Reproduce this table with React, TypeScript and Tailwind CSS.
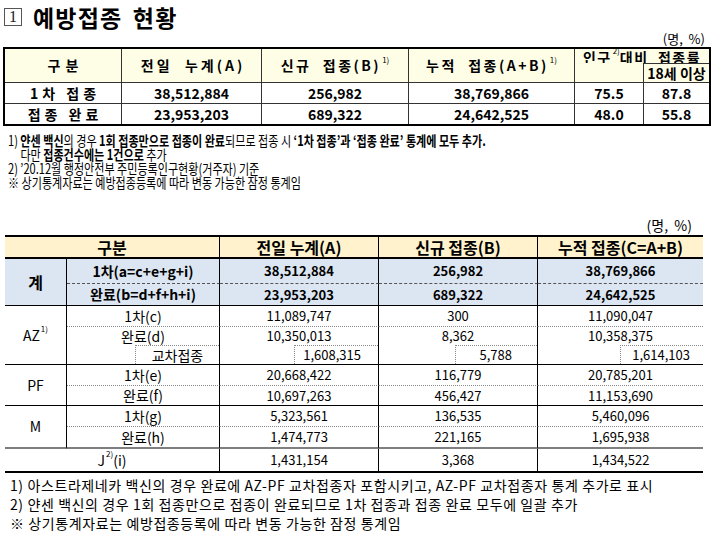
import React from "react";

const F = "font-['Noto_Sans_CJK_KR','Noto_Sans',sans-serif]";

function Sup({ children }: { children: React.ReactNode }) {
  return <sup className="text-[8px] top-[-6px] ml-[1px] font-normal tracking-normal">{children}</sup>;
}

const H1 = "bg-[#FEFEE6] flex items-center justify-center font-bold text-[14px] text-black";
const bd = "border-[#333]";

function Table1() {
  const num = "flex items-center justify-center font-bold text-[14px]";
  return (
    <div className="ml-[3px] w-[708px] border-2 border-black grid grid-cols-[117px_140px_147px_166px_69px_65px] grid-rows-[14px_20px_21px_20px]">
      <div className={`row-span-2 border-r border-b ${bd} ${H1} tracking-[5px] pl-[5px]`}>구분</div>
      <div className={`row-span-2 border-r border-b ${bd} ${H1} tracking-[3px] pl-[3px]`}>전일&nbsp;&nbsp;누계(A)</div>
      <div className={`row-span-2 border-r border-b ${bd} ${H1} tracking-[2.5px]`}>
        신규&nbsp;&nbsp;접종(B)<Sup>1)</Sup>
      </div>
      <div className={`row-span-2 border-r border-b ${bd} ${H1} tracking-[2.5px]`}>
        누적&nbsp;&nbsp;접종(A+B)<Sup>1)</Sup>
      </div>
      <div className={`col-span-2 ${H1} tracking-[1.5px] leading-none pt-[2px]`}>
        인구<Sup>2)</Sup>대비&nbsp;&nbsp;접종률
      </div>
      <div className={`border-r border-b ${bd} bg-[#FEFEE6]`} />
      <div className={`border-t border-b ${bd} ${H1} leading-none`}>18세 이상</div>

      <div className={`border-r border-b ${bd} ${num} tracking-[4px] pl-[4px]`}>1차&nbsp;접종</div>
      <div className={`border-r border-b ${bd} ${num}`}>38,512,884</div>
      <div className={`border-r border-b ${bd} ${num}`}>256,982</div>
      <div className={`border-r border-b ${bd} ${num}`}>38,769,866</div>
      <div className={`border-r border-b ${bd} ${num}`}>75.5</div>
      <div className={`border-b ${bd} ${num}`}>87.8</div>

      <div className={`border-r ${bd} ${num} tracking-[4px] pl-[4px]`}>접종&nbsp;완료</div>
      <div className={`border-r ${bd} ${num}`}>23,953,203</div>
      <div className={`border-r ${bd} ${num}`}>689,322</div>
      <div className={`border-r ${bd} ${num}`}>24,642,525</div>
      <div className={`border-r ${bd} ${num}`}>48.0</div>
      <div className={`${num}`}>55.8</div>
    </div>
  );
}

const BB: Record<string, string> = {
  dash: "border-b [border-bottom-style:dashed] border-b-[#555]",
  solid: "border-b border-b-black",
  dot: "border-b [border-bottom-style:dotted] border-b-[#888]",
  none: "",
  gray2: "border-b-2 border-b-[#7f7f7f]",
};

type Row = {
  label: React.ReactNode;
  vals: string[];
  b: string;
  bold?: boolean;
  blue?: boolean;
};

function Table2() {
  const th = "bg-[#FFF2CC] border-b-2 border-b-black flex items-center justify-center font-bold text-[16px]";
  const rowsTop: Row[] = [
    { label: "1차(a=c+e+g+i)", vals: ["38,512,884", "256,982", "38,769,866"], b: "dash", bold: true, blue: true },
    { label: "완료(b=d+f+h+i)", vals: ["23,953,203", "689,322", "24,642,525"], b: "solid", bold: true, blue: true },
  ];
  const cellCls = (r: Row, last: boolean) =>
    `${last ? "" : "border-r border-r-black"} ${BB[r.b]} ${r.blue ? "bg-[#DCE6F2]" : ""} flex items-center justify-center ${
      r.bold ? "font-bold text-[13px]" : "text-[13px]"
    }`;
  const labelCls = (r: Row) =>
    `border-r border-r-black ${BB[r.b]} ${r.blue ? "bg-[#DCE6F2]" : ""} flex items-center justify-center ${
      r.bold ? "font-bold text-[14px]" : "text-[14px]"
    }`;
  const renderRow = (r: Row, k: string) => (
    <React.Fragment key={k}>
      <div className={labelCls(r)}>{r.label}</div>
      {r.vals.map((v, i) => (
        <div key={i} className={cellCls(r, i === 2)}>
          {v}
        </div>
      ))}
    </React.Fragment>
  );
  const group = "border-r border-r-black flex items-center justify-center text-[14px]";
  const crossPads = ["pr-[17px]", "pr-[25px]", "pr-[13px]"];
  const crossW = ["w-[84px]", "w-[82px]", "w-[83px]"];
  const crossVals = ["1,608,315", "5,788", "1,614,103"];
  return (
    <div className="ml-[5px] w-[698px] border-t-2 border-b-2 border-black grid grid-cols-[62px_153px_159px_159px_165px] grid-rows-[22px_25px_22px_21px_18px_20px_21px_20px_21px_22px_22px]">
      <div className={`col-span-2 border-r border-r-black ${th}`}>구분</div>
      <div className={`border-r border-r-black ${th}`}>전일 누계(A)</div>
      <div className={`border-r border-r-black ${th}`}>신규 접종(B)</div>
      <div className={`${th}`}>누적 접종(C=A+B)</div>

      <div className={`row-span-2 ${group} border-b border-b-black bg-[#DCE6F2] font-bold text-[16px]`}>계</div>
      {renderRow(rowsTop[0], "a")}
      {renderRow(rowsTop[1], "b")}

      <div className={`row-span-3 ${group} border-b border-b-black`}>
        AZ<Sup>1)</Sup>
      </div>
      {renderRow({ label: "1차(c)", vals: ["11,089,747", "300", "11,090,047"], b: "dot" }, "c")}
      {renderRow({ label: "완료(d)", vals: ["10,350,013", "8,362", "10,358,375"], b: "none" }, "d")}
      <div className="border-r border-r-black border-b border-b-black flex justify-end">
        <div className="w-[84px] h-full border-l border-t border-dotted border-[#888] flex items-center justify-center text-[14px]">
          교차접종
        </div>
      </div>
      {crossVals.map((v, i) => (
        <div
          key={i}
          className={`${i === 2 ? "" : "border-r border-r-black"} border-b border-b-black flex justify-end`}
        >
          <div
            className={`${crossW[i]} h-full border-l border-t border-dotted border-[#888] flex items-center justify-end text-[13px] ${crossPads[i]}`}
          >
            {v}
          </div>
        </div>
      ))}

      <div className={`row-span-2 ${group} border-b border-b-black`}>PF</div>
      {renderRow({ label: "1차(e)", vals: ["20,668,422", "116,779", "20,785,201"], b: "dot" }, "e")}
      {renderRow({ label: "완료(f)", vals: ["10,697,263", "456,427", "11,153,690"], b: "solid" }, "f")}

      <div className={`row-span-2 ${group} border-b-2 border-b-[#7f7f7f]`}>M</div>
      {renderRow({ label: "1차(g)", vals: ["5,323,561", "136,535", "5,460,096"], b: "dot" }, "g")}
      {renderRow({ label: "완료(h)", vals: ["1,474,773", "221,165", "1,695,938"], b: "gray2" }, "h")}

      <div className="col-span-2 border-r border-r-black flex items-center justify-center text-[14px]">
        J<Sup>2)</Sup>(i)
      </div>
      <div className="border-r border-r-black flex items-center justify-center text-[13px]">1,431,154</div>
      <div className="border-r border-r-black flex items-center justify-center text-[13px]">3,368</div>
      <div className="flex items-center justify-center text-[13px]">1,434,522</div>
    </div>
  );
}

export default function App() {
  const sq = "origin-left [transform:scaleX(0.79)] whitespace-nowrap h-[14px]";
  return (
    <div className={`w-[717px] h-[541px] bg-white text-black overflow-hidden ${F}`}>
      <div className="pt-[3px] h-[31px] pl-[4px] flex items-center">
        <div className="w-[18px] h-[18px] border border-[#555] flex items-center justify-center font-['Liberation_Serif',serif] text-[16px] leading-none text-[#222]">
          1
        </div>
        <div className="ml-[11px] text-[23px] font-bold leading-[28px] tracking-[1.2px] [word-spacing:4px]">예방접종 현황</div>
      </div>
      <div className="h-[16px] flex justify-end pr-[12px] text-[13px] leading-[16px]">(명,&nbsp;&nbsp;%)</div>
      <Table1 />
      <div className="mt-[7px] pl-[8px] text-[14px] leading-[14px]">
        <div className={sq}>
          1) <b>얀센 백신</b>의 경우 <b>1회 접종만으로 접종이 완료</b>되므로 접종 시 <b>‘1차 접종’과 ‘접종 완료’ 통계에 모두 추가.</b>
        </div>
        <div className={sq}>
          &nbsp;&nbsp;&nbsp;&nbsp;&nbsp;다만 <b>접종건수에는 1건으로</b> 추가
        </div>
        <div className={sq}>2) ’20.12월 행정안전부 주민등록인구현황(거주자) 기준</div>
        <div className={sq}>※ 상기통계자료는 예방접종등록에 따라 변동 가능한 잠정 통계임</div>
      </div>
      <div className="mt-[28px] h-[18px] flex justify-end pr-[25px] text-[14px] leading-[16px]">(명,&nbsp;&nbsp;%)</div>
      <Table2 />
      <div className="mt-[3px] pl-[10px] text-[14px] leading-[19px] tracking-[0.6px] whitespace-nowrap">
        <div>1) 아스트라제네카 백신의 경우 완료에 AZ-PF 교차접종자 포함시키고, AZ-PF 교차접종자 통계 추가로 표시</div>
        <div>2) 얀센 백신의 경우 1회 접종만으로 접종이 완료되므로 1차 접종과 접종 완료 모두에 일괄 추가</div>
        <div>※ 상기통계자료는 예방접종등록에 따라 변동 가능한 잠정 통계임</div>
      </div>
    </div>
  );
}
